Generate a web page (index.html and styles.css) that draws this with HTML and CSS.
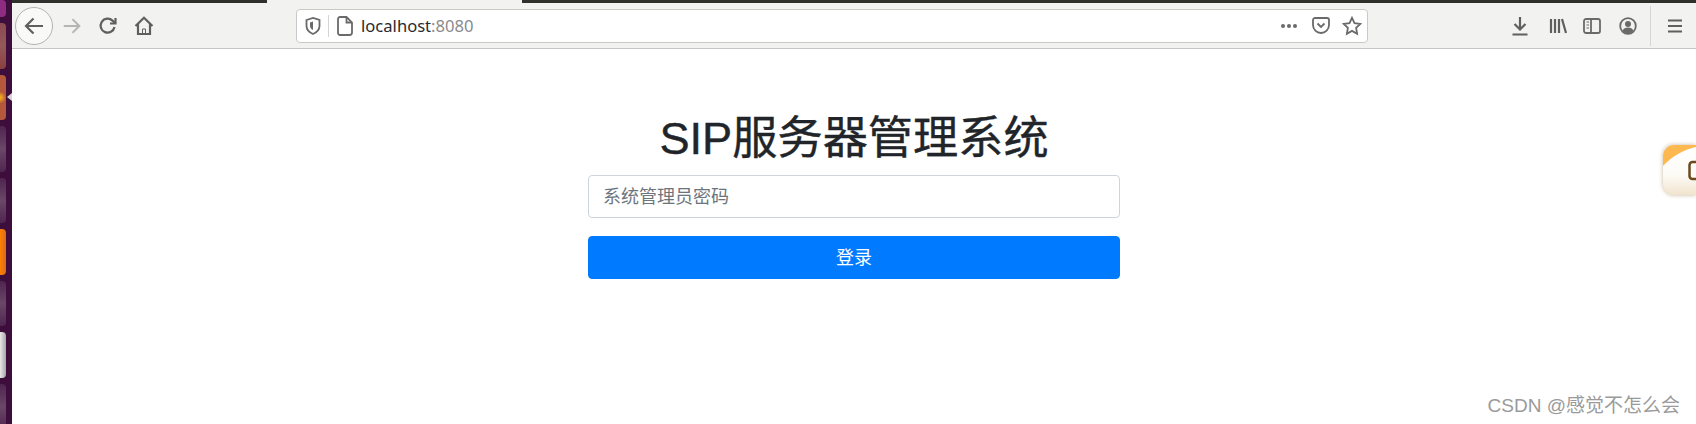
FILE: index.html
```html
<!DOCTYPE html>
<html lang="zh-CN">
<head>
  <meta charset="UTF-8" />
  <title>SIP服务器管理系统</title>
  <link rel="stylesheet" href="styles.css">
</head>
<body>
  <div class="desktop">
    <!-- launcher on the left, cut off by the screenshot -->
    <div class="dock">
      <div class="dock-item first"></div>
      <div class="dock-item dusk"></div>
      <div class="dock-item brown"></div>
      <div class="dock-item plum"></div>
      <div class="dock-item plum"></div>
      <div class="dock-item orange"></div>
      <div class="dock-item plum"></div>
      <div class="dock-item silver"></div>
      <div class="dock-item plum"></div>
      <div class="dock-arrow"></div>
    </div>

    <div class="browser">
      <div class="tabstrip">
        <div class="tab-dark first-tab"></div>
        <div class="tab-light"></div>
        <div class="tab-dark"></div>
      </div>

      <div class="toolbar">
        <div class="back">
          <svg width="24" height="24" viewBox="0 0 24 24" class="icon"><path d="M21 12H4M11.5 4.5L4 12l7.5 7.5"/></svg>
        </div>
        <div class="slot forward">
          <svg width="22" height="22" viewBox="0 0 24 24" class="icon faded"><path d="M3 12h17M12.5 4.5L20 12l-7.5 7.5"/></svg>
        </div>
        <div class="slot">
          <svg width="20" height="20" viewBox="0 0 20 20" class="icon"><path d="M16.5 11a7 7 0 1 1-2-6.4L17 7"/><path d="M17.5 2v5.5H12" /></svg>
        </div>
        <div class="slot">
          <svg width="20" height="20" viewBox="0 0 20 20" class="icon"><path d="M1.5 10L10 1.8 18.5 10"/><path d="M4 8v10h12V8"/><path d="M8.500 18v-5h3v5" class="tiny"/></svg>
        </div>

        <div class="urlbar">
          <div class="url-icon">
            <svg width="16" height="18" viewBox="0 0 16 18" class="icon thin"><path d="M1.5 3L8 1l6.500 2v6c0 4-3 6.500-6.500 8C4.500 15.500 1.500 13 1.500 9z"/><path d="M8 4.500v8.500c-2-1-3-2.500-3-4.500V5.500z" class="fill"/></svg>
          </div>
          <div class="url-sep"></div>
          <div class="url-icon doc">
            <svg width="16" height="20" viewBox="0 0 16 20" class="icon thin"><path d="M3 1h6.500L15 6.500V16.500a2.500 2.500 0 0 1-2.500 2.500h-9.500a2 2 0 0 1-2-2V3a2 2 0 0 1 2-2z"/><path d="M9.500 1v5.500H15"/></svg>
          </div>
          <div class="url-text">localhost<span class="port">:8080</span></div>
          <div class="url-actions">
            <svg width="18" height="6" viewBox="0 0 18 6" class="dots"><circle cx="3" cy="3" r="2"/><circle cx="9" cy="3" r="2"/><circle cx="15" cy="3" r="2"/></svg>
            <svg width="18" height="18" viewBox="0 0 18 18" class="icon thin pocket"><path d="M1 3a2 2 0 0 1 2-2h12a2 2 0 0 1 2 2v5a8 8 0 0 1-16 0z"/><path d="M5.500 6.500L9 10l3.500-3.500"/></svg>
            <svg width="20" height="20" viewBox="0 0 20 20" class="icon thin star"><path d="M10 1.800l2.500 5.300 5.800.8-4.200 4 1 5.800-5.100-2.800-5.100 2.800 1-5.800-4.200-4 5.800-.8z"/></svg>
          </div>
        </div>

        <div class="tools">
          <div class="slot">
            <svg width="18" height="20" viewBox="0 0 18 20" class="icon"><path d="M9 1v12M3.500 8L9 13.500 14.500 8M1.500 18.500h15"/></svg>
          </div>
          <div class="slot lib">
            <svg width="18" height="16" viewBox="0 0 18 16" class="icon"><path d="M2 1v14M6 1v14M10 1v14M13 1l4 14"/></svg>
          </div>
          <div class="slot">
            <svg width="18" height="16" viewBox="0 0 18 16" class="icon thin"><rect x="1" y="1" width="16" height="14" rx="2"/><path d="M8 1v14"/><path d="M3.500 4h2.500M3.500 7h2.500M3.500 10h2.500" class="tiny"/></svg>
          </div>
          <div class="slot">
            <svg width="18" height="18" viewBox="0 0 18 18" class="icon thin"><circle cx="9" cy="9" r="7.800"/><circle cx="9" cy="7" r="3" class="fill"/><path d="M3.500 14c1-3 3-3.500 5.500-3.500s4.500.5 5.500 3.500a7.500 7.500 0 0 1-11 0z" class="fill"/></svg>
          </div>
          <div class="tool-sep"></div>
          <div class="slot menu">
            <svg width="16" height="14" viewBox="0 0 16 14" class="icon"><path d="M1 1.500h14M1 7h14M1 12.500h14"/></svg>
          </div>
        </div>
      </div>

      <div class="page">
        <div class="login">
          <h1 class="title">SIP服务器管理系统</h1>
          <input class="password" type="password" placeholder="系统管理员密码">
          <button class="submit" type="button">登录</button>
        </div>

        <div class="side-tab">
          <svg width="33" height="50" viewBox="0 0 33 50">
            <defs>
              <linearGradient id="tabFill" x1="0" y1="0" x2="0" y2="1">
                <stop offset="0" stop-color="#ffffff"/>
                <stop offset="0.6" stop-color="#fdfbf6"/>
                <stop offset="1" stop-color="#f1e4cd"/>
              </linearGradient>
            </defs>
            <path d="M33 0H11A11 11 0 0 0 0 11v28a11 11 0 0 0 11 11h22z" fill="url(#tabFill)"/>
            <path d="M33 0H11A11 11 0 0 0 0 11v10C9 11 20 5 33 2z" fill="#fdb84f"/>
            <rect x="26.500" y="17" width="14" height="17" rx="3" fill="none" stroke="#6b4a1f" stroke-width="2.500"/>
          </svg>
        </div>

        <div class="watermark">CSDN @感觉不怎么会</div>
      </div>
    </div>
  </div>
</body>
</html>
```

FILE: styles.css
```css
* {
  box-sizing: border-box;
}

html, body {
  height: 100%;
}

body {
  margin: 0;
  overflow: hidden;
  font-family: "Liberation Sans", "Noto Sans CJK SC", sans-serif;
  background-color: #fff;
}

.desktop {
  display: flex;
  height: 424px;
}

/* launcher */
.dock {
  position: relative;
  width: 12px;
  flex-shrink: 0;
  display: flex;
  flex-direction: column;
  gap: 6px;
  overflow: hidden;
  background-color: #3d0e3b;
}

.dock-item {
  width: 6px;
  height: 45.5px;
  flex-shrink: 0;
  border-radius: 0 4px 4px 0;
}

.dock-item.first {
  height: 17px;
  background-color: #8d2c80;
}

.dock-item.dusk {
  background: linear-gradient(#8a4a52, #93585a 50%, #8c3f3f);
}

.dock-item.brown {
  background: radial-gradient(circle at 0 50%, #ffb11f 0, #d98a2a 3px, #b4573a 6px);
}

.dock-item.plum {
  background: linear-gradient(#4f2550, #6a4768 50%, #4f2550);
}

.dock-item.orange {
  background: linear-gradient(90deg, #ff7f00, #d76a1a);
}

.dock-item.silver {
  background: linear-gradient(90deg, #e8e8e6, #a9a5a6);
}

.dock-arrow {
  position: absolute;
  left: 7px;
  top: 93px;
  border-top: 4px solid transparent;
  border-bottom: 4px solid transparent;
  border-right: 5px solid #d8d4d8;
}

.browser {
  flex: 1;
  display: flex;
  flex-direction: column;
  min-width: 0;
}

.tabstrip {
  display: flex;
  height: 3px;
  flex-shrink: 0;
}

.tab-dark {
  flex: 1;
  background-color: #2f2f2b;
}

.tab-dark.first-tab {
  flex: 0 0 255px;
}

.tab-light {
  flex: 0 0 255px;
  background-color: #f2f2f0;
}

/* toolbar */
.toolbar {
  display: flex;
  align-items: center;
  height: 46px;
  flex-shrink: 0;
  padding-left: 3px;
  background-color: #f2f2f0;
  border-bottom: 1px solid #c6c5c1;
}

.icon {
  display: block;
  fill: none;
  stroke: #5f5f5f;
  stroke-width: 2.200;
}

.icon.thin {
  stroke-width: 1.800;
  stroke: #6a6a6a;
}

.icon.faded {
  stroke: #b5b5b2;
}

.icon .fill {
  fill: #6a6a6a;
  stroke: none;
}

.icon .tiny {
  stroke-width: 1;
}

.back {
  width: 38px;
  height: 38px;
  flex-shrink: 0;
  display: flex;
  align-items: center;
  justify-content: center;
  border-radius: 50%;
  border: 1px solid #b3b3b0;
  background-color: #f9f9f7;
}

.slot {
  width: 36px;
  height: 36px;
  flex-shrink: 0;
  display: flex;
  align-items: center;
  justify-content: center;
}

.slot.forward {
  width: 37px;
}

.slot.lib {
  padding-left: 3px;
}

.slot.menu {
  margin-left: 6px;
}

.urlbar {
  display: flex;
  align-items: center;
  width: 1072px;
  height: 34px;
  margin-left: 134px;
  flex-shrink: 0;
  background-color: #fff;
  border: 1px solid #c9c9c6;
  border-radius: 4px;
}

.url-icon {
  width: 31px;
  display: flex;
  justify-content: center;
}

.url-icon.doc {
  width: 32px;
}

.url-sep {
  width: 1px;
  height: 22px;
  background-color: #d4d4d2;
}

.url-text {
  font-family: "Noto Sans", sans-serif;
  font-size: 16.6px;
  color: #2a2a2e;
}

.port {
  color: #8a8a8c;
}

.url-actions {
  margin-left: auto;
  display: flex;
  align-items: center;
  padding-right: 5px;
}

.dots {
  display: block;
  fill: #6a6a6a;
}

.pocket {
  margin-left: 14px;
}

.star {
  margin-left: 12px;
}

.tools {
  display: flex;
  align-items: center;
  margin-left: auto;
  padding-right: 3px;
}

.tool-sep {
  width: 1px;
  height: 40px;
  margin-left: 4px;
  background-color: #d6d6d3;
}

/* login form */
.page {
  position: relative;
  flex: 1;
  background-color: #fff;
  overflow: hidden;
}

.login {
  width: 532px;
  margin: 0 auto;
  padding-top: 63px;
  display: flex;
  flex-direction: column;
}

.title {
  margin: 0 0 9px;
  font-size: 45.2px;
  font-weight: 400;
  line-height: 54px;
  text-align: center;
  color: #212529;
  -webkit-text-stroke: 0.4px #212529;
}

.password {
  height: 42.75px;
  padding: 2px 14px 0;
  font: inherit;
  font-size: 18px;
  color: #495057;
  background-color: #fff;
  border: 1px solid #ced4da;
  border-radius: 4px;
}

.password::placeholder {
  color: #6c757d;
  opacity: 1;
}

.submit {
  height: 42.75px;
  margin-top: 18px;
  padding: 0 0 3px;
  font: inherit;
  font-size: 18px;
  color: #fff;
  background-color: #007bff;
  border: 1px solid #007bff;
  border-radius: 4px;
}

.side-tab {
  position: absolute;
  right: 0;
  top: 96px;
  height: 50px;
  filter: drop-shadow(0 0 2px rgba(160, 130, 90, 0.6));
}

.side-tab svg {
  display: block;
}

.watermark {
  position: absolute;
  right: 16px;
  bottom: 6px;
  font-size: 19px;
  line-height: 24px;
  color: #9a9a9a;
  white-space: nowrap;
}
```
